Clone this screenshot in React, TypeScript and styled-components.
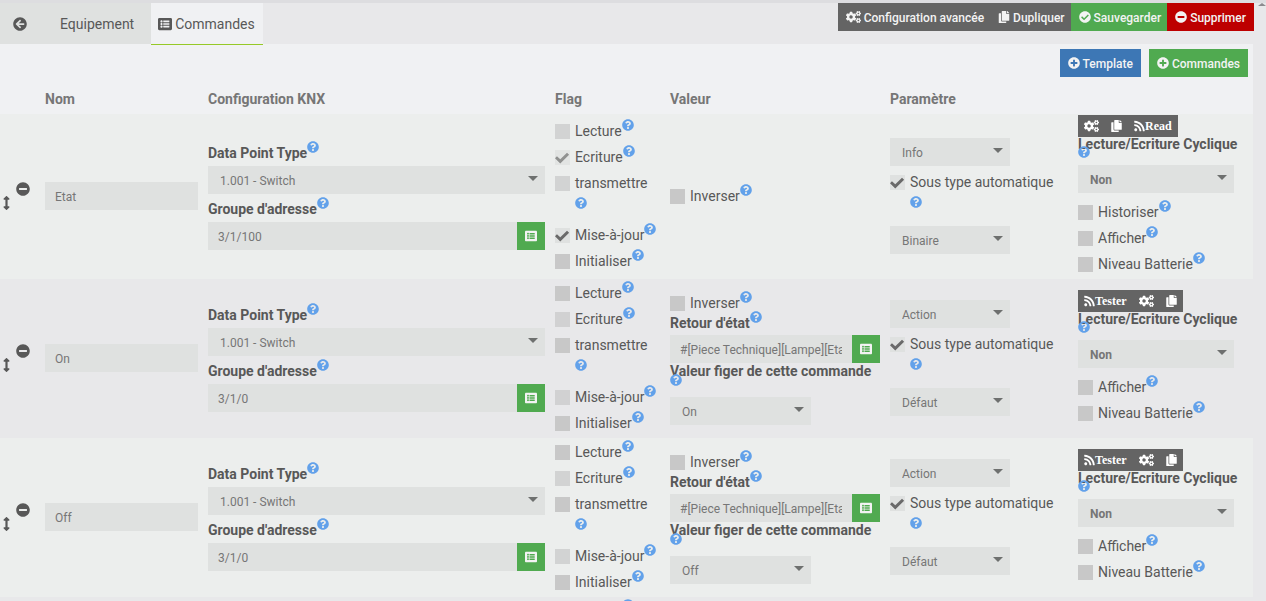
import React from "react";
import styled, { createGlobalStyle, css } from "styled-components";
import {
  FaArrowCircleLeft,
  FaArrowsAltV,
  FaCheckCircle,
  FaCogs,
  FaCopy,
  FaListAlt,
  FaMinusCircle,
  FaPlusCircle,
  FaQuestionCircle,
  FaRss,
} from "react-icons/fa";

const color = {
  page: "#e8e8ea",
  panel: "#f0f1f3",
  stripe: "#eceeed",
  control: "#dfe1e0",
  text: "#585858",
  muted: "#767676",
  dark: "#646464",
  green: "#50aa50",
  blue: "#3d77b5",
  red: "#bd0000",
  help: "#62a1ea",
  accent: "#96c927",
};

const GlobalStyle = createGlobalStyle`
  * { box-sizing: border-box; }
  body {
    margin: 0;
    background: ${color.page};
    color: ${color.text};
    font: 14px/20px Roboto, "Liberation Sans", sans-serif;
  }
  button, input, select { font: inherit; color: inherit; border: 0; border-radius: 0; margin: 0; }
  svg { display: block; flex: none; }
`;

const Cogs = styled(FaCogs)`
  width: 15px;
  height: 12px;
`;

const VerticalArrows = styled(FaArrowsAltV)`
  width: 7px;
  height: 14px;
`;

const Page = styled.div`
  height: 100vh;
  overflow: hidden;
  border-top: 3px solid #dddde0;
  position: relative;
`;

const ScrollArrow = styled.span`
  position: absolute;
  top: 0;
  right: 0;
  border: 4px solid transparent;
  border-top: 0;
  border-bottom: 3px solid #8b8b8f;
`;

const Header = styled.header`
  display: flex;
  justify-content: space-between;
  align-items: flex-start;
  padding-right: 12px;
`;

const Tabs = styled.nav`
  display: flex;
`;

const Tab = styled.a<{ $active?: boolean; $pad: string }>`
  display: flex;
  align-items: center;
  gap: 3px;
  height: 41px;
  padding: ${(p) => p.$pad};
  color: ${color.text};
  background: ${color.control};
  text-decoration: none;
  ${(p) =>
    p.$active &&
    css`
      height: 42px;
      margin-bottom: -1px;
      z-index: 1;
      background: ${color.panel};
      border-bottom: 1px solid ${color.accent};
    `}
`;

const ButtonRow = styled.div<{ $gap?: number }>`
  display: flex;
  gap: ${(p) => p.$gap ?? 0}px;
`;

const Button = styled.button<{ $bg: string; $tight?: boolean }>`
  display: flex;
  align-items: center;
  gap: 3px;
  height: 28px;
  padding: 0 ${(p) => (p.$tight ? 6 : 8)}px 0 8px;
  background: ${(p) => p.$bg};
  color: #f3f3f3;
  font-size: 12px;
  font-weight: 500;
  cursor: pointer;
`;

const ButtonText = styled.span`
  padding-top: 2px;
`;

const Panel = styled.main`
  margin-right: 13px;
  background: ${color.panel};
`;

const Toolbar = styled.div`
  display: flex;
  justify-content: flex-end;
  padding: 5px 5px 7px;
`;

const Table = styled.table`
  width: 100%;
  table-layout: fixed;
  border-collapse: collapse;
`;

const Col = styled.col<{ $width?: number }>`
  width: ${(p) => (p.$width ? `${p.$width}px` : "auto")};
`;

const HeadCell = styled.th`
  height: 30px;
  padding: 0 5px;
  text-align: left;
  font-weight: 700;
  color: ${color.muted};
`;

const Row = styled.tr`
  background: ${color.page};
  &:nth-child(odd) {
    background: ${color.stripe};
  }
`;

const Cell = styled.td`
  padding: 1px 5px 2px;
  vertical-align: middle;
`;

const HandleCell = styled(Cell)`
  padding-left: 3px;
`;

const Handles = styled.div`
  display: flex;
  gap: 6px;
  height: 28px;
`;

const IconButton = styled.button<{ $low?: boolean }>`
  align-self: ${(p) => (p.$low ? "flex-end" : "flex-start")};
  padding: 0;
  background: none;
  font-size: 14px;
  cursor: pointer;
`;

const TextInput = styled.input`
  display: block;
  width: 100%;
  min-width: 0;
  height: 28px;
  padding: 2px 10px 0;
  background: ${color.control};
  color: ${color.muted};
  font-size: 12px;
`;

const InputGroup = styled.div`
  display: flex;
`;

const PickButton = styled.button`
  display: flex;
  flex: none;
  align-items: center;
  justify-content: center;
  width: 28px;
  height: 28px;
  padding: 0;
  background: ${color.green};
  color: #f3f3f3;
  font-size: 12px;
  cursor: pointer;
`;

const SelectBox = styled.div<{ $width?: number }>`
  position: relative;
  width: ${(p) => (p.$width ? `${p.$width}px` : "100%")};
  &::after {
    content: "";
    position: absolute;
    top: 10px;
    right: 7px;
    border: 5px solid transparent;
    border-top-color: #6e706f;
    border-bottom: 0;
    pointer-events: none;
  }
`;

const Select = styled.select<{ $bold?: boolean }>`
  appearance: none;
  display: block;
  width: 100%;
  height: 28px;
  padding: 2px 24px 0 12px;
  background: ${color.control};
  color: ${color.muted};
  font-size: 12px;
  font-weight: ${(p) => (p.$bold ? 700 : 400)};
`;

const FieldLabel = styled.label<{ $height: number; $line: number; $stacked?: boolean }>`
  display: flex;
  flex-direction: ${(p) => (p.$stacked ? "column" : "row")};
  height: ${(p) => p.$height}px;
  line-height: ${(p) => p.$line}px;
  font-weight: 700;
  white-space: nowrap;
`;

const Help = styled.span<{ $pull?: number }>`
  display: block;
  align-self: flex-start;
  margin-top: ${(p) => p.$pull ?? 0}px;
  color: ${color.help};
  font-size: 12px;
`;

const LabelLine = styled.span`
  display: flex;
  align-items: center;
  height: 1lh;
`;

const RaisedHelp = styled(Help)`
  align-self: center;
  margin-bottom: 12px;
`;

const Check = styled.label<{ $tall?: boolean }>`
  display: flex;
  height: ${(p) => (p.$tall ? 52 : 26)}px;
  gap: 5px;
  line-height: 26px;
  white-space: nowrap;
`;

const CheckInput = styled.input<{ $dim?: boolean }>`
  appearance: none;
  flex: none;
  width: 15px;
  height: 15px;
  margin-top: 6px;
  background: #c8c8c8;
  opacity: ${(p) => (p.$dim ? 0.7 : 1)};
  &:checked {
    background: ${color.control};
  }
  &:checked::after {
    content: "";
    display: block;
    width: 15px;
    height: 15px;
    background: #6a6a6a;
    clip-path: polygon(0 55%, 13% 41%, 35% 62%, 80% 19%, 94% 32%, 35% 90%);
  }
`;

const Stack = styled.div`
  display: flex;
  flex-direction: column;
  gap: 4px;
`;

const ValueFields = styled.div`
  padding-bottom: 1px;
`;

const SubType = styled.div`
  padding: 3px 0 5px;
`;

const MiniBar = styled.div`
  display: flex;
`;

const MiniButton = styled.button`
  display: flex;
  align-items: center;
  height: 22px;
  padding: 0 6px;
  background: ${color.dark};
  color: #fff;
  font: bold 12px "Liberation Serif", serif;
  cursor: pointer;
`;

const RssIcon = styled(FaRss)`
  width: 11px;
  height: 12px;
`;

const CopyIcon = styled(FaCopy)`
  width: 11px;
  height: 12px;
`;

const Options = styled.div`
  padding-top: 6px;
`;

function CheckBox({ label, checked, dim, wrap }: { label: string; checked?: boolean; dim?: boolean; wrap?: boolean }) {
  return (
    <Check $tall={wrap}>
      <CheckInput type="checkbox" defaultChecked={checked} $dim={dim} />
      <span>
        <LabelLine>
          {label}
          {!wrap && (
            <RaisedHelp>
              <FaQuestionCircle />
            </RaisedHelp>
          )}
        </LabelLine>
        {wrap && (
          <Help $pull={1}>
            <FaQuestionCircle />
          </Help>
        )}
      </span>
    </Check>
  );
}

function Label({ text, target, height, line, stacked }: { text: string; target: string; height: number; line: number; stacked?: boolean }) {
  return (
    <FieldLabel htmlFor={target} $height={height} $line={line} $stacked={stacked}>
      <LabelLine>
        {text}
        {!stacked && (
          <RaisedHelp>
            <FaQuestionCircle />
          </RaisedHelp>
        )}
      </LabelLine>
      {stacked && (
        <Help $pull={-5}>
          <FaQuestionCircle />
        </Help>
      )}
    </FieldLabel>
  );
}

function Choice({ id, name, value, width, bold }: { id?: string; name?: string; value: string; width?: number; bold?: boolean }) {
  return (
    <SelectBox $width={width}>
      <Select id={id} aria-label={name} $bold={bold} defaultValue={value}>
        <option>{value}</option>
      </Select>
    </SelectBox>
  );
}

function Picker({ id, value }: { id: string; value: string }) {
  return (
    <InputGroup>
      <TextInput id={id} defaultValue={value} />
      <PickButton type="button" aria-label="Choisir">
        <FaListAlt />
      </PickButton>
    </InputGroup>
  );
}

type Command = {
  id: string;
  name: string;
  address: string;
  info?: boolean;
  subType: string;
  dim: boolean[];
  checked: boolean[];
};

const none = [false, false, false, false, false];
const actionDim = [false, true, false, true, false];

const commands: Command[] = [
  {
    id: "etat",
    name: "Etat",
    address: "3/1/100",
    info: true,
    subType: "Binaire",
    dim: [true, true, true, false, false],
    checked: [false, true, false, true, false],
  },
  { id: "on", name: "On", address: "3/1/0", subType: "Défaut", dim: actionDim, checked: none },
  { id: "off", name: "Off", address: "3/1/0", subType: "Défaut", dim: actionDim, checked: none },
  { id: "on-2", name: "On", address: "3/1/1", subType: "Défaut", dim: actionDim, checked: none },
];

const flags = ["Lecture", "Ecriture", "transmettre", "Mise-à-jour", "Initialiser"];

function CommandRow({ command }: { command: Command }) {
  const { id, name, address, info, subType, dim, checked } = command;
  const configure = (
    <MiniButton type="button" aria-label="Configurer">
      <Cogs />
    </MiniButton>
  );
  const copy = (
    <MiniButton type="button" aria-label="Copier">
      <CopyIcon />
    </MiniButton>
  );
  return (
    <Row>
      <HandleCell>
        <Handles>
          <IconButton type="button" aria-label="Déplacer" $low>
            <VerticalArrows />
          </IconButton>
          <IconButton type="button" aria-label="Retirer">
            <FaMinusCircle />
          </IconButton>
        </Handles>
      </HandleCell>
      <Cell>
        <TextInput aria-label="Nom" defaultValue={name} />
      </Cell>
      <Cell>
        <Stack>
          <div>
            <Label text="Data Point Type" target={`${id}-dpt`} height={24} line={22} />
            <Choice id={`${id}-dpt`} value="1.001 - Switch" />
          </div>
          <div>
            <Label text="Groupe d'adresse" target={`${id}-address`} height={24} line={22} />
            <Picker id={`${id}-address`} value={address} />
          </div>
        </Stack>
      </Cell>
      <Cell>
        {flags.map((flag, i) => (
          <CheckBox key={flag} label={flag} checked={checked[i]} dim={dim[i]} wrap={flag === "transmettre"} />
        ))}
      </Cell>
      <Cell>
        <CheckBox label="Inverser" />
        {!info && (
          <ValueFields>
            <Label text="Retour d'état" target={`${id}-state`} height={19} line={14} />
            <Picker id={`${id}-state`} value="#[Piece Technique][Lampe][Etat]#" />
            <Label text="Valeur figer de cette commande" target={`${id}-value`} height={34} line={16} stacked />
            <Choice id={`${id}-value`} value={name} width={141} />
          </ValueFields>
        )}
      </Cell>
      <Cell>
        <Choice name="Type" value={info ? "Info" : "Action"} width={120} />
        <SubType>
          <CheckBox label="Sous type automatique" checked wrap />
        </SubType>
        <Choice name="Sous type" value={subType} width={120} />
      </Cell>
      <Cell>
        <MiniBar>
          {info ? (
            <>
              {configure}
              {copy}
              <MiniButton type="button">
                <RssIcon />
                Read
              </MiniButton>
            </>
          ) : (
            <>
              <MiniButton type="button">
                <RssIcon />
                Tester
              </MiniButton>
              {configure}
              {copy}
            </>
          )}
        </MiniBar>
        <Label text="Lecture/Ecriture Cyclique" target={`${id}-cycle`} height={28} line={14} stacked />
        <Choice id={`${id}-cycle`} value="Non" width={156} bold />
        <Options>
          {info && <CheckBox label="Historiser" />}
          <CheckBox label="Afficher" />
          <CheckBox label="Niveau Batterie" />
        </Options>
      </Cell>
    </Row>
  );
}

export default function App() {
  return (
    <Page>
      <GlobalStyle />
      <ScrollArrow />
      <Header>
        <Tabs>
          <Tab href="#retour" aria-label="Retour" $pad="0 15px 0 13px">
            <FaArrowCircleLeft />
          </Tab>
          <Tab href="#equipement" $pad="0 17px 0 18px">
            Equipement
          </Tab>
          <Tab href="#commandes" $active $pad="0 8px 0 7px">
            <FaListAlt />
            Commandes
          </Tab>
        </Tabs>
        <ButtonRow>
          <Button type="button" $bg={color.dark} $tight>
            <Cogs />
            <ButtonText>Configuration avancée</ButtonText>
          </Button>
          <Button type="button" $bg={color.dark} $tight>
            <FaCopy />
            <ButtonText>Dupliquer</ButtonText>
          </Button>
          <Button type="button" $bg={color.green} $tight>
            <FaCheckCircle />
            <ButtonText>Sauvegarder</ButtonText>
          </Button>
          <Button type="button" $bg={color.red}>
            <FaMinusCircle />
            <ButtonText>Supprimer</ButtonText>
          </Button>
        </ButtonRow>
      </Header>
      <Panel>
        <Toolbar>
          <ButtonRow $gap={8}>
            <Button type="button" $bg={color.blue}>
              <FaPlusCircle />
              <ButtonText>Template</ButtonText>
            </Button>
            <Button type="button" $bg={color.green}>
              <FaPlusCircle />
              <ButtonText>Commandes</ButtonText>
            </Button>
          </ButtonRow>
        </Toolbar>
        <Table>
          <colgroup>
            <Col $width={40} />
            <Col $width={163} />
            <Col />
            <Col $width={115} />
            <Col $width={220} />
            <Col $width={188} />
            <Col $width={180} />
          </colgroup>
          <thead>
            <tr>
              <HeadCell aria-label="Ordre" />
              <HeadCell>Nom</HeadCell>
              <HeadCell>Configuration KNX</HeadCell>
              <HeadCell>Flag</HeadCell>
              <HeadCell>Valeur</HeadCell>
              <HeadCell>Paramètre</HeadCell>
              <HeadCell aria-label="Options" />
            </tr>
          </thead>
          <tbody>
            {commands.map((command) => (
              <CommandRow key={command.id} command={command} />
            ))}
          </tbody>
        </Table>
      </Panel>
    </Page>
  );
}
